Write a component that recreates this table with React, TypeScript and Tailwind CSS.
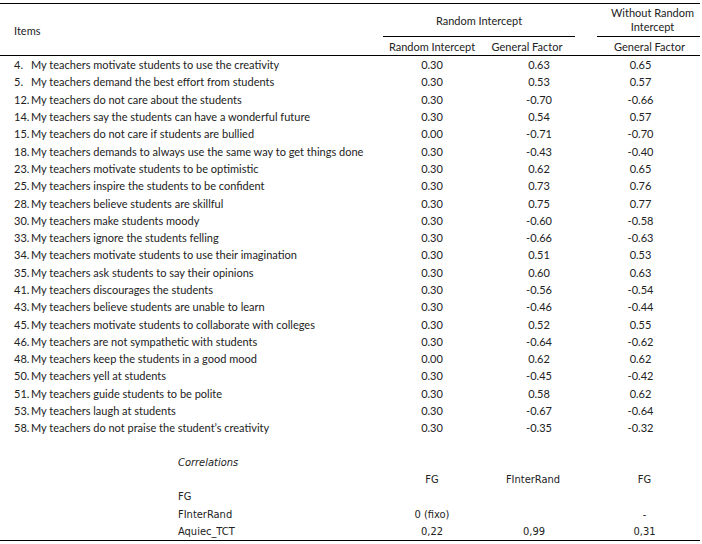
const rows: [string, string, string, string, string][] = [
  ["4.", "My teachers motivate students to use the creativity", "0.30", "0.63", "0.65"],
  ["5.", "My teachers demand the best effort from students", "0.30", "0.53", "0.57"],
  ["12.", "My teachers do not care about the students", "0.30", "-0.70", "-0.66"],
  ["14.", "My teachers say the students can have a wonderful future", "0.30", "0.54", "0.57"],
  ["15.", "My teachers do not care if students are bullied", "0.00", "-0.71", "-0.70"],
  ["18.", "My teachers demands to always use the same way to get things done", "0.30", "-0.43", "-0.40"],
  ["23.", "My teachers motivate students to be optimistic", "0.30", "0.62", "0.65"],
  ["25.", "My teachers inspire the students to be confident", "0.30", "0.73", "0.76"],
  ["28.", "My teachers believe students are skillful", "0.30", "0.75", "0.77"],
  ["30.", "My teachers make students moody", "0.30", "-0.60", "-0.58"],
  ["33.", "My teachers ignore the students felling", "0.30", "-0.66", "-0.63"],
  ["34.", "My teachers motivate students to use their imagination", "0.30", "0.51", "0.53"],
  ["35.", "My teachers ask students to say their opinions", "0.30", "0.60", "0.63"],
  ["41.", "My teachers discourages the students", "0.30", "-0.56", "-0.54"],
  ["43.", "My teachers believe students are unable to learn", "0.30", "-0.46", "-0.44"],
  ["45.", "My teachers motivate students to collaborate with colleges", "0.30", "0.52", "0.55"],
  ["46.", "My teachers are not sympathetic with students", "0.30", "-0.64", "-0.62"],
  ["48.", "My teachers keep the students in a good mood", "0.00", "0.62", "0.62"],
  ["50.", "My teachers yell at students", "0.30", "-0.45", "-0.42"],
  ["51.", "My teachers guide students to be polite", "0.30", "0.58", "0.62"],
  ["53.", "My teachers laugh at students", "0.30", "-0.67", "-0.64"],
  ["58.", "My teachers do not praise the student’s creativity", "0.30", "-0.35", "-0.32"],
];

const corr: [string, string, string, string][] = [
  ["FG", "", "", ""],
  ["FInterRand", "0 (fixo)", "", "-"],
  ["Aquiec_TCT", "0,22", "0,99", "0,31"],
];

const cols = "grid grid-cols-[383px_96px_96px_22px_103px]";
const narrow = "font-['Liberation_Sans_Narrow','DejaVu_Sans_Condensed',sans-serif] text-[11px]";

export default function App() {
  return (
    <div className="w-[702px] h-[544px] bg-white text-[#222] font-['Lato',sans-serif] text-[11px] leading-none">
      <div className="w-[700px] pt-[3px]">
        {/* header */}
        <div className={`${cols} border-t border-b border-black h-[53px]`}>
          <div className="flex items-center pl-[14px] pt-[1px]">Items</div>
          <div className="col-span-2 flex flex-col">
            <div className="h-[33px] flex items-center justify-center border-b border-black">Random Intercept</div>
            <div className="flex flex-1">
              <div className="w-[96px] flex items-center justify-center pl-[2px]">Random Intercept</div>
              <div className="w-[96px] flex items-center justify-center">General Factor</div>
            </div>
          </div>
          <div />
          <div className="flex flex-col">
            <div className="h-[33px] flex flex-col items-center justify-center border-b border-black leading-[14px] pl-[8px]">
              <span>Without Random</span>
              <span>Intercept</span>
            </div>
            <div className="flex flex-1 items-center justify-center pl-[2px]">General Factor</div>
          </div>
        </div>

        {/* items */}
        <div>
          {rows.map(([n, text, a, b, c]) => (
            <div key={n} className={`${cols} h-[17.3px] items-center`}>
              <div className="flex pl-[14px] whitespace-nowrap">
                <span className="w-[17px]">{n}</span>
                <span>{text}</span>
              </div>
              <div className="text-center pl-[2px]">{a}</div>
              <div className="text-center pl-[24px]">{b}</div>
              <div />
              <div className="text-center pr-[16px]">{c}</div>
            </div>
          ))}
        </div>

        {/* correlations */}
        <div className={`${narrow} pt-[17px] border-b border-black`}>
          <div className={`${cols} h-[17.3px] items-center`}>
            <div className="pl-[178px] italic">Correlations</div>
          </div>
          <div className={`${cols} h-[17.3px] items-center`}>
            <div />
            <div className="text-center pl-[2px]">FG</div>
            <div className="text-center pl-[12px]">FInterRand</div>
            <div />
            <div className="text-center pr-[8px]">FG</div>
          </div>
          {corr.map(([label, a, b, c]) => (
            <div key={label} className={`${cols} h-[17.3px] items-center`}>
              <div className="pl-[178px]">{label}</div>
              <div className="text-center pl-[2px]">{a}</div>
              <div className="text-center pl-[14px]">{b}</div>
              <div />
              <div className="text-center pr-[8px]">{c}</div>
            </div>
          ))}
        </div>
      </div>
    </div>
  );
}
